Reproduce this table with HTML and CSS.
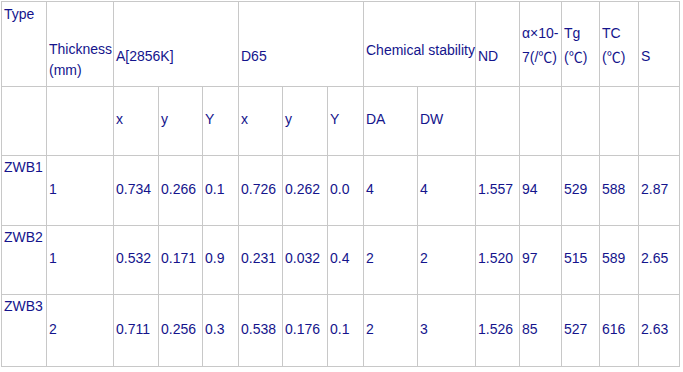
FILE: index.html
```html
<!DOCTYPE html>
<html lang="en">
<head>
<meta charset="utf-8">
<title>Glass specifications</title>
<link rel="stylesheet" href="styles.css">
</head>
<body>
<table class="spec">
  <colgroup>
    <col class="w45"><col class="w67"><col class="w45"><col class="w44"><col class="w36">
    <col class="w44"><col class="w45"><col class="w36"><col class="w54"><col class="w58">
    <col class="w44"><col class="w42"><col class="w38"><col class="w39"><col class="w41">
  </colgroup>
  <tr class="r1">
    <td class="h-type">Type</td>
    <td class="h-thick">Thickness (mm)</td>
    <td colspan="3" class="h-one">A[2856K]</td>
    <td colspan="3" class="h-one">D65</td>
    <td colspan="2" class="h-chem">Chemical stability</td>
    <td class="h-one">ND</td>
    <td class="h-two">α×10-<wbr>7(/℃)</td>
    <td class="h-two">Tg (℃)</td>
    <td class="h-two">TC (℃)</td>
    <td class="h-one">S</td>
  </tr>
  <tr class="r2">
    <td></td><td></td>
    <td>x</td><td>y</td><td>Y</td>
    <td>x</td><td>y</td><td>Y</td>
    <td>DA</td><td>DW</td>
    <td></td><td></td><td></td><td></td><td></td>
  </tr>
  <tr class="r3">
    <td class="name">ZWB1</td><td>1</td>
    <td>0.734</td><td>0.266</td><td>0.1</td>
    <td>0.726</td><td>0.262</td><td>0.0</td>
    <td>4</td><td>4</td>
    <td>1.557</td><td>94</td><td>529</td><td>588</td><td>2.87</td>
  </tr>
  <tr class="r4">
    <td class="name">ZWB2</td><td>1</td>
    <td>0.532</td><td>0.171</td><td>0.9</td>
    <td>0.231</td><td>0.032</td><td>0.4</td>
    <td>2</td><td>2</td>
    <td>1.520</td><td>97</td><td>515</td><td>589</td><td>2.65</td>
  </tr>
  <tr class="r5">
    <td class="name">ZWB3</td><td>2</td>
    <td>0.711</td><td>0.256</td><td>0.3</td>
    <td>0.538</td><td>0.176</td><td>0.1</td>
    <td>2</td><td>3</td>
    <td>1.526</td><td>85</td><td>527</td><td>616</td><td>2.63</td>
  </tr>
</table>
</body>
</html>
```
FILE: styles.css
```css
html, body {
  margin: 0;
  background: #ffffff;
}

body {
  padding: 1px 0 0 1px;
}

.spec {
  border-collapse: collapse;
  table-layout: fixed;
  width: 679px;
  font-family: "Liberation Sans", Arial, "Noto Sans CJK SC", sans-serif;
  font-size: 14px;
  line-height: 21px;
  color: #14148c;
}

.spec td {
  border: 1px solid #c8c8c8;
  padding: 0 0 3px 2px;
  vertical-align: middle;
}

.w36 { width: 36px; }
.w38 { width: 38px; }
.w39 { width: 39px; }
.w41 { width: 41px; }
.w42 { width: 42px; }
.w44 { width: 44px; }
.w45 { width: 45px; }
.w54 { width: 54px; }
.w58 { width: 58px; }
.w67 { width: 67px; }

.r1 { height: 85px; }
.r2 { height: 69px; }
.r3 { height: 70px; }
.r4 { height: 69px; }
.r5 { height: 72px; }

.spec .r1 td {
  vertical-align: top;
  padding-bottom: 0;
}

.spec .h-type { padding-top: 2px; }
.spec .h-thick { padding-top: 37px; }
.spec .h-one { padding-top: 44px; }
.spec .h-chem { padding-top: 38px; white-space: nowrap; }
.spec .h-two { padding-top: 20px; line-height: 23.5px; }

.spec .name {
  vertical-align: top;
  padding-top: 1px;
  padding-bottom: 0;
}
```
